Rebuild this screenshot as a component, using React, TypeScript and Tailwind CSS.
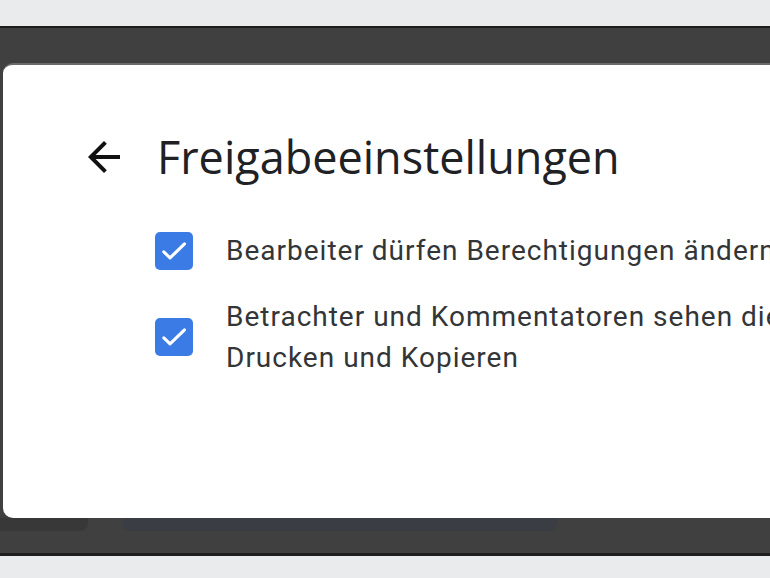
import React from "react"

function CheckBox() {
  return (
    <div className="w-[38px] h-[38px] shrink-0 rounded-[5px] bg-[#3b7be6] flex items-center justify-center">
      <svg width="34" height="34" viewBox="0 0 24 24" fill="none">
        <path d="M4.8 12.6l4.4 4.3L19.4 7" stroke="white" strokeWidth="2.2" strokeLinecap="round" strokeLinejoin="round" />
      </svg>
    </div>
  )
}

export default function App() {
  return (
    <div className="w-[770px] h-[578px] overflow-hidden bg-[#eaebed] flex flex-col" style={{ fontFamily: "Roboto, 'Liberation Sans', sans-serif" }}>
      <div className="h-[26px] shrink-0" />
      <div className="h-[530px] shrink-0 border-t-2 border-t-[#1e1e1e] border-b-[3px] border-b-[#1e1e1e] bg-[#404040] flex flex-col">
        <div className="h-[35px] shrink-0" />
        <div className="ml-[3px] h-[455px] shrink-0 bg-white rounded-l-[10px] border-t-2 border-t-[#6a6a6a] overflow-hidden">
          <div className="pl-[77px] pt-[68px] flex items-center">
            <svg width="48" height="48" viewBox="0 0 24 24" fill="#111">
              <path d="M20 11H7.83l5.59-5.59L12 4l-8 8 8 8 1.41-1.41L7.83 13H20v-2z" />
            </svg>
            <div className="ml-[29px] text-[45px] leading-[48px] text-[#202124] whitespace-nowrap" style={{ fontFamily: "'Open Sans', sans-serif" }}>
              Freigabeeinstellungen
            </div>
          </div>
          <div className="pl-[152px] mt-[50px] flex flex-col gap-[25px] text-[28px] tracking-[1px] text-[#333537] whitespace-nowrap">
            <div className="flex items-center gap-[33px]">
              <CheckBox />
              <div className="leading-[40px]">Bearbeiter dürfen Berechtigungen ändern und Inhalte freigeben</div>
            </div>
            <div className="flex items-center gap-[33px]">
              <CheckBox />
              <div className="leading-[41px]">
                <div>Betrachter und Kommentatoren sehen die Option zum Herunterladen,</div>
                <div>Drucken und Kopieren</div>
              </div>
            </div>
          </div>
        </div>
        <div className="flex h-[13px] shrink-0">
          <div className="w-[88px] bg-[#383838] rounded-br-[8px]" />
          <div className="ml-[34px] w-[435px] bg-[#3b3d44] rounded-b-[8px]" />
        </div>
      </div>
      <div className="flex-1" />
    </div>
  )
}
